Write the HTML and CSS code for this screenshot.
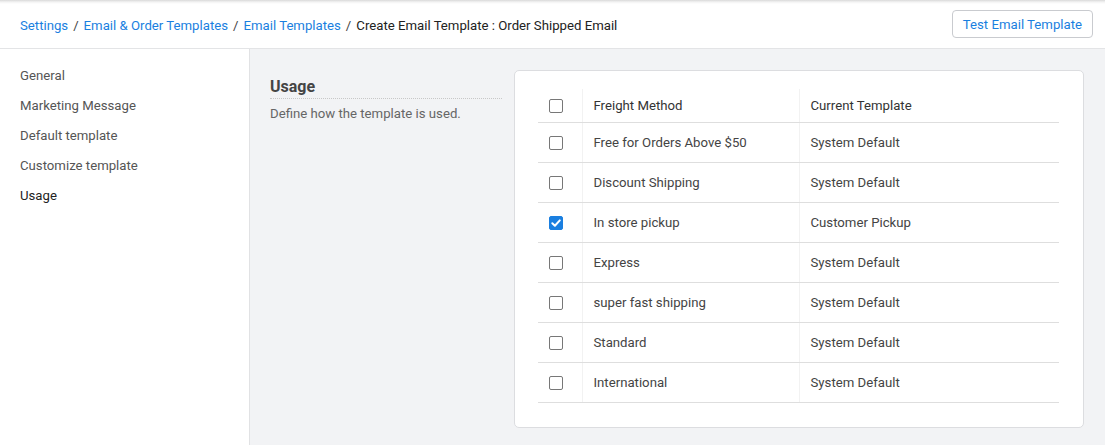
FILE: index.html
```html
<!DOCTYPE html>
<html>
<head>
<meta charset="utf-8">
<link rel="stylesheet" href="styles.css">
</head>
<body>
<header class="topbar">
  <nav class="crumbs">
    <a class="crumb-link">Settings</a><span class="sep">/</span><a class="crumb-link">Email &amp; Order Templates</a><span class="sep">/</span><a class="crumb-link">Email Templates</a><span class="sep">/</span><span class="crumb-current">Create Email Template : Order Shipped Email</span>
  </nav>
  <button class="btn-outline">Test Email Template</button>
</header>
<div class="layout">
  <aside class="sidebar">
    <div class="side-item">General</div>
    <div class="side-item">Marketing Message</div>
    <div class="side-item">Default template</div>
    <div class="side-item">Customize template</div>
    <div class="side-item active">Usage</div>
  </aside>
  <main class="main">
    <section class="intro">
      <h2 class="intro-title">Usage</h2>
      <p class="intro-desc">Define how the template is used.</p>
    </section>
    <section class="card">
      <table class="grid">
        <thead>
          <tr><th class="c-check"><span class="cb"></span></th><th>Freight Method</th><th>Current Template</th></tr>
        </thead>
        <tbody>
          <tr><td class="c-check"><span class="cb"></span></td><td>Free for Orders Above $50</td><td>System Default</td></tr>
          <tr><td class="c-check"><span class="cb"></span></td><td>Discount Shipping</td><td>System Default</td></tr>
          <tr><td class="c-check"><span class="cb checked"><svg viewBox="0 0 14 14" width="14" height="14"><path d="M3.3 7.2 L5.9 9.7 L10.8 4.4" fill="none" stroke="#fff" stroke-width="2" stroke-linecap="round" stroke-linejoin="round"/></svg></span></td><td>In store pickup</td><td>Customer Pickup</td></tr>
          <tr><td class="c-check"><span class="cb"></span></td><td>Express</td><td>System Default</td></tr>
          <tr><td class="c-check"><span class="cb"></span></td><td>super fast shipping</td><td>System Default</td></tr>
          <tr><td class="c-check"><span class="cb"></span></td><td>Standard</td><td>System Default</td></tr>
          <tr><td class="c-check"><span class="cb"></span></td><td>International</td><td>System Default</td></tr>
        </tbody>
      </table>
    </section>
  </main>
</div>
</body>
</html>
```
FILE: styles.css
```css
* { box-sizing: border-box; }
html, body { margin: 0; padding: 0; }
body {
  font-family: Roboto, "Liberation Sans", Arial, sans-serif;
  font-size: 13.2px;
  color: #333;
  background: #f2f3f5;
  width: 1105px;
  height: 445px;
  overflow: hidden;
}
.topbar {
  height: 49px;
  background: #fff;
  border-bottom: 1px solid #e3e4e6;
  display: flex;
  align-items: center;
  justify-content: space-between;
  padding: 0 12px 0 20px;
  background-image: linear-gradient(to bottom, #d9d9d9 0, #f3f3f3 2px, #fff 4px);
}
.crumbs { display: flex; align-items: center; padding-top: 2px; }
.crumb-link { color: #1a7fe0; text-decoration: none; }
.crumb-current { color: #222; }
.sep { color: #444; margin: 0 5px; }
.btn-outline {
  font-family: inherit;
  font-size: 13.2px;
  color: #1a7fe0;
  background: #fff;
  border: 1px solid #c9cbcf;
  border-radius: 4px;
  height: 28px;
  padding: 0 10px;
  margin-top: 0;
}
.layout { display: flex; height: 396px; }
.sidebar {
  width: 250px;
  background: #fff;
  border-right: 1px solid #e1e2e4;
  padding-top: 12px;
}
.side-item {
  height: 30px;
  line-height: 30px;
  padding-left: 20px;
  color: #555;
}
.side-item.active { color: #222; }
.main {
  flex: 1;
  display: flex;
  gap: 12px;
  padding: 21px 21px 0 20px;
  align-items: flex-start;
}
.intro { width: 232px; padding-top: 7px; }
.intro-title {
  margin: 0;
  font-size: 16px;
  font-weight: bold;
  color: #444;
  line-height: 20px;
  padding-bottom: 1px;
  border-bottom: 1px dotted #c8c8c8;
}
.intro-desc { margin: 6px 0 0; color: #666; line-height: 18px; }
.card {
  flex: 1;
  background: #fff;
  border: 1px solid #dcdde0;
  border-radius: 5px;
  padding: 18px 24px 24px 23px;
}
.grid { width: 100%; border-collapse: collapse; }
.grid th, .grid td {
  text-align: left;
  font-weight: normal;
  color: #444;
  border-bottom: 1px solid #dedede;
  padding: 0 0 0 11px;
  height: 40px;
}
.grid th { height: 33px; color: #333; }
.grid th + th, .grid td + td { border-left: 1px solid #f2f2f2; }
.grid th:nth-child(2), .grid td:nth-child(2) { width: 217px; }
.grid .c-check { width: 44px; padding: 0 0 0 11px; }
.cb {
  display: block;
  width: 14px;
  height: 14px;
  border: 1px solid #777;
  border-radius: 2px;
  background: #fff;
  margin-top: 1px;
}
.cb.checked { background: #1a7fe0; border-color: #1a7fe0; }
.cb.checked svg { display: block; margin: -1px 0 0 -1px; }
```
